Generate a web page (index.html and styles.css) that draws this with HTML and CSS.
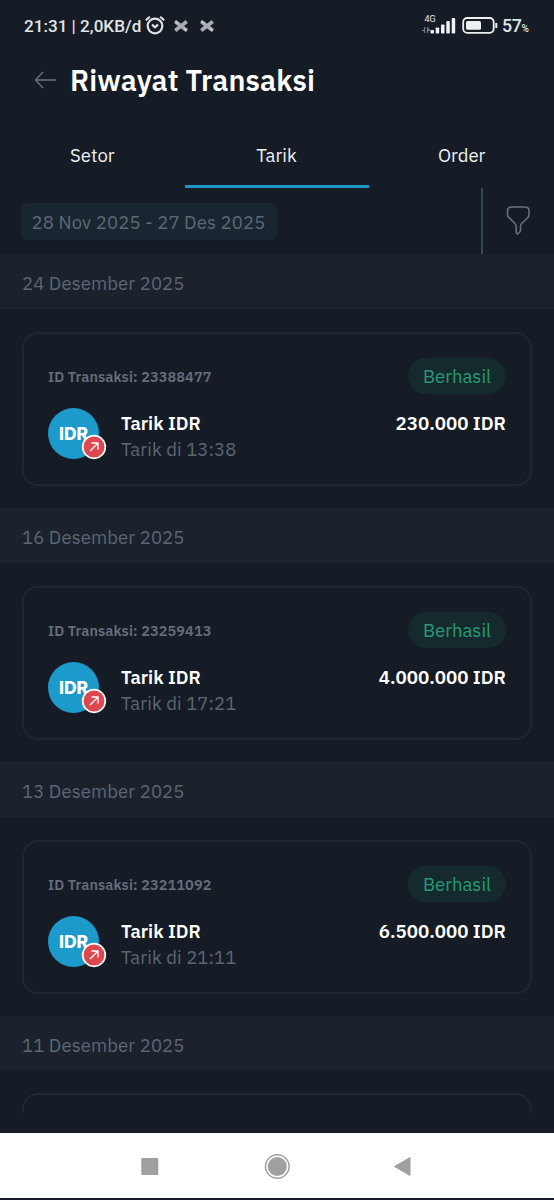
FILE: index.html
```html
<!DOCTYPE html>
<html lang="id">
<head>
<meta charset="utf-8">
<title>Riwayat Transaksi</title>
<link rel="stylesheet" href="styles.css">
</head>
<body>
<svg class="defs" width="0" height="0">
  <symbol id="cross" viewBox="0 0 16 16"><path d="M2.200 3.500 13.800 12.500M13.800 3.500 2.200 12.500" stroke="#a9adb1" stroke-width="3.600"/><path d="M5 8h6" stroke="#a9adb1" stroke-width="4"/><path d="M2 3l3 2.500M11 10.500l3 2.500" stroke="#cfd1d3" stroke-width="1.200"/></symbol>
  <symbol id="out" viewBox="0 0 26 26"><circle cx="13" cy="13" r="11.300" fill="#dd4850" stroke="#fff" stroke-width="1.700"/><path d="M9 17 16.800 9.200M10.500 9h6.500v6.500" fill="none" stroke="#fff" stroke-width="1.300"/></symbol>
</svg>
<div class="screen">
  <div class="status">
    <span class="clock">21:31 | 2,0KB/d</span>
    <svg class="alarm" width="22" height="20" viewBox="0 0 22 20"><g fill="none" stroke="#dfe1e3" stroke-width="2.200"><circle cx="11" cy="11" r="7.300"/><path d="M1.800 5.300 5.800 1.700M20.200 5.300 16.200 1.700M8 9.600l3 2.700 3-2.700"/></g></svg>
    <svg class="x1" width="16" height="16"><use href="#cross"/></svg>
    <svg class="x2" width="16" height="16"><use href="#cross"/></svg>
    <div class="signal">
      <span class="net">4G</span>
      <svg width="36" height="18" viewBox="0 0 36 18"><g stroke="#777d83" stroke-width="1.200" fill="none"><path d="M3.500 10v6M1 13.500h2.500M6.500 10v6M6.500 11l2 2-2 1"/></g><g fill="#f0f1f2"><rect x="9.500" y="13" width="3.500" height="3.500" rx=".8"/><rect x="14.700" y="10.500" width="3.500" height="6" rx=".8"/><rect x="20" y="7.500" width="3.500" height="9" rx=".8"/><rect x="25.300" y="4" width="3.500" height="12.500" rx=".8"/><rect x="30.700" y="1" width="3.500" height="15.500" rx=".8"/></g></svg>
    </div>
    <svg class="battery" width="36" height="17" viewBox="0 0 36 17"><rect x="1.200" y="1" width="30.500" height="14.800" rx="4" fill="none" stroke="#eef0f1" stroke-width="1.800"/><rect x="4" y="4" width="15" height="8.800" rx="1.500" fill="#eef0f1"/><path d="M34.300 6v5" stroke="#eef0f1" stroke-width="2"/></svg>
    <span class="percent">57<small>%</small></span>
  </div>
  <header class="header">
    <svg width="24" height="20" viewBox="0 0 24 20"><path d="M22 10H2M9 2 1.500 10 9 18" fill="none" stroke="#68717e" stroke-width="1.400"/></svg>
    <h1>Riwayat Transaksi</h1>
  </header>
  <nav class="tabs"><span class="setor">Setor</span><span class="active">Tarik</span><span class="order">Order</span></nav>
  <div class="filter">
    <div class="range">28 Nov 2025 - 27 Des 2025</div>
    <div class="funnel"><svg width="26" height="32" viewBox="0 0 26 32"><path d="M5.500 2h13.500q4 0 4 4v3.500q0 2-1.500 3.500l-5.500 5q-1.500 1.400-1.500 3.500v3.500q0 1.500-1.200 2.500l-.8.700q-2.300 1.400-2.300-1.500v-5q0-2-1.400-3.500l-5.800-5.500Q1.500 11.500 1.500 9.500V6q0-4 4-4z" fill="none" stroke="#68717e" stroke-width="1.600"/></svg></div>
  </div>
  <main class="list">
    <section class="group"><h2>24 Desember 2025</h2>
      <article class="card">
        <div class="top"><span class="id">ID Transaksi: 23388477</span><span class="pill">Berhasil</span></div>
        <div class="row"><div class="coin">IDR<svg class="badge" width="26" height="26"><use href="#out"/></svg></div><div class="info"><b>Tarik IDR</b><span>Tarik di 13:38</span></div><b class="amount">230.000 IDR</b></div>
      </article></section>
    <section class="group"><h2>16 Desember 2025</h2>
      <article class="card">
        <div class="top"><span class="id">ID Transaksi: 23259413</span><span class="pill">Berhasil</span></div>
        <div class="row"><div class="coin">IDR<svg class="badge" width="26" height="26"><use href="#out"/></svg></div><div class="info"><b>Tarik IDR</b><span>Tarik di 17:21</span></div><b class="amount">4.000.000 IDR</b></div>
      </article></section>
    <section class="group"><h2>13 Desember 2025</h2>
      <article class="card">
        <div class="top"><span class="id">ID Transaksi: 23211092</span><span class="pill">Berhasil</span></div>
        <div class="row"><div class="coin">IDR<svg class="badge" width="26" height="26"><use href="#out"/></svg></div><div class="info"><b>Tarik IDR</b><span>Tarik di 21:11</span></div><b class="amount">6.500.000 IDR</b></div>
      </article></section>
    <section class="group"><h2>11 Desember 2025</h2><article class="card"></article></section>
  </main>
  <footer class="keys">
    <svg width="554" height="65" viewBox="0 0 554 65"><g fill="#a0a0a0"><rect x="141.300" y="25" width="17" height="17" rx="1"/><circle cx="277.300" cy="33.500" r="9.500"/><circle cx="277.300" cy="33.500" r="11.800" fill="none" stroke="#a0a0a0" stroke-width="1.500"/><path d="M394.500 33.500 410 24.500v18z" stroke="#a0a0a0" stroke-width="1" stroke-linejoin="round"/></g></svg>
  </footer>
</div>
</body>
</html>
```
FILE: styles.css
```css
* { box-sizing: border-box; }
body { margin: 0; background: #151c26; font-family: "IBM Plex Sans", Roboto, "Noto Sans", sans-serif; color: #fff; }
.defs { position: absolute; }
.screen { width: 554px; height: 1200px; overflow: hidden; display: flex; flex-direction: column; background: #151c26; white-space: nowrap; }
.status { height: 50px; flex: none; display: flex; align-items: center; padding: 1px 24px 0; font-family: Roboto, sans-serif; font-weight: 500; color: #e1e4e7; }
.clock { width: 120px; font-size: 17.100px; }
.alarm { margin-bottom: 2px; }
.x1 { margin-left: 7px; }
.x2 { margin-left: 10px; }
.signal { position: relative; width: 36px; height: 18px; margin-left: auto; }
.signal svg { display: block; }
.net { position: absolute; left: 3.500px; top: -3px; font-size: 9px; line-height: 10px; font-weight: 400; }
.battery { margin-left: 5px; }
.percent { width: 28px; margin-left: 4px; font-size: 17.800px; letter-spacing: -.4px; }
.percent small { font-size: 10px; letter-spacing: 0; }
.header { height: 75px; flex: none; display: flex; align-items: flex-start; padding: 11px 34px 0; gap: 12px; }
.header svg { margin-top: 9px; flex: none; }
.header h1 { margin: 0; font-size: 28.800px; line-height: 39px; font-weight: 600; letter-spacing: .15px; }
.tabs { height: 62.500px; flex: none; display: grid; grid-template-columns: repeat(3, 1fr); text-align: center; font-size: 18.500px; line-height: 59px; color: #f0f1f3; }
.tabs span { padding-top: .5px; }
.tabs .active { border-bottom: 3px solid #2196c5; padding-right: 1px; }
.filter { height: 66.800px; flex: none; display: flex; justify-content: space-between; padding-left: 21px; }
.range { width: 256px; height: 36.500px; margin-top: 15.500px; padding-left: 10.500px; border-radius: 6px; background: #192631; color: #5d6876; font-size: 18.500px; line-height: 39px; letter-spacing: .13px; }
.funnel { width: 73px; border-left: 2px solid #34475a; padding: 17.500px 0 0 23px; }
.list { height: 858.700px; flex: none; overflow: hidden; }
.group { height: 253.870px; }
.group h2 { height: 55px; margin: 0; padding-left: 22px; background: #1b222c; color: #5c6675; font-size: 18.500px; font-weight: 400; line-height: 59px; letter-spacing: .1px; }
.card { height: 154px; margin: 22.500px 22px 0; padding: 24px 24px 0; border: 2px solid #202731; border-radius: 16px; }
.top { display: flex; justify-content: space-between; align-items: center; height: 36px; }
.id { color: #646e7c; font-size: 14.500px; font-weight: 600; padding-top: 2px; letter-spacing: .08px; }
.pill { width: 98px; height: 36px; border-radius: 18px; background: #152a2d; color: #279a75; text-align: center; font-size: 18.500px; line-height: 36px; }
.row { display: flex; padding-top: 14px; }
.coin { position: relative; width: 51px; height: 51px; border-radius: 50%; background: #1b9acb; text-align: center; font: 800 17.500px/52px Inter, sans-serif; letter-spacing: -.1px; }
.badge { position: absolute; left: 33px; top: 26px; }
.info { display: flex; flex-direction: column; margin-left: 22px; font-size: 18.500px; line-height: 26px; padding-top: 2px; }
.info b { font-weight: 600; }
.info span { color: #5c6675; letter-spacing: .08px; }
.amount { margin-left: auto; padding-top: 2px; font-size: 18.700px; line-height: 26px; font-weight: 600; }
.list .group:last-child { height: 97px; overflow: hidden; }
.keys { height: 65px; margin-top: 20px; flex: none; background: #fff; }
.keys svg { display: block; }
```
